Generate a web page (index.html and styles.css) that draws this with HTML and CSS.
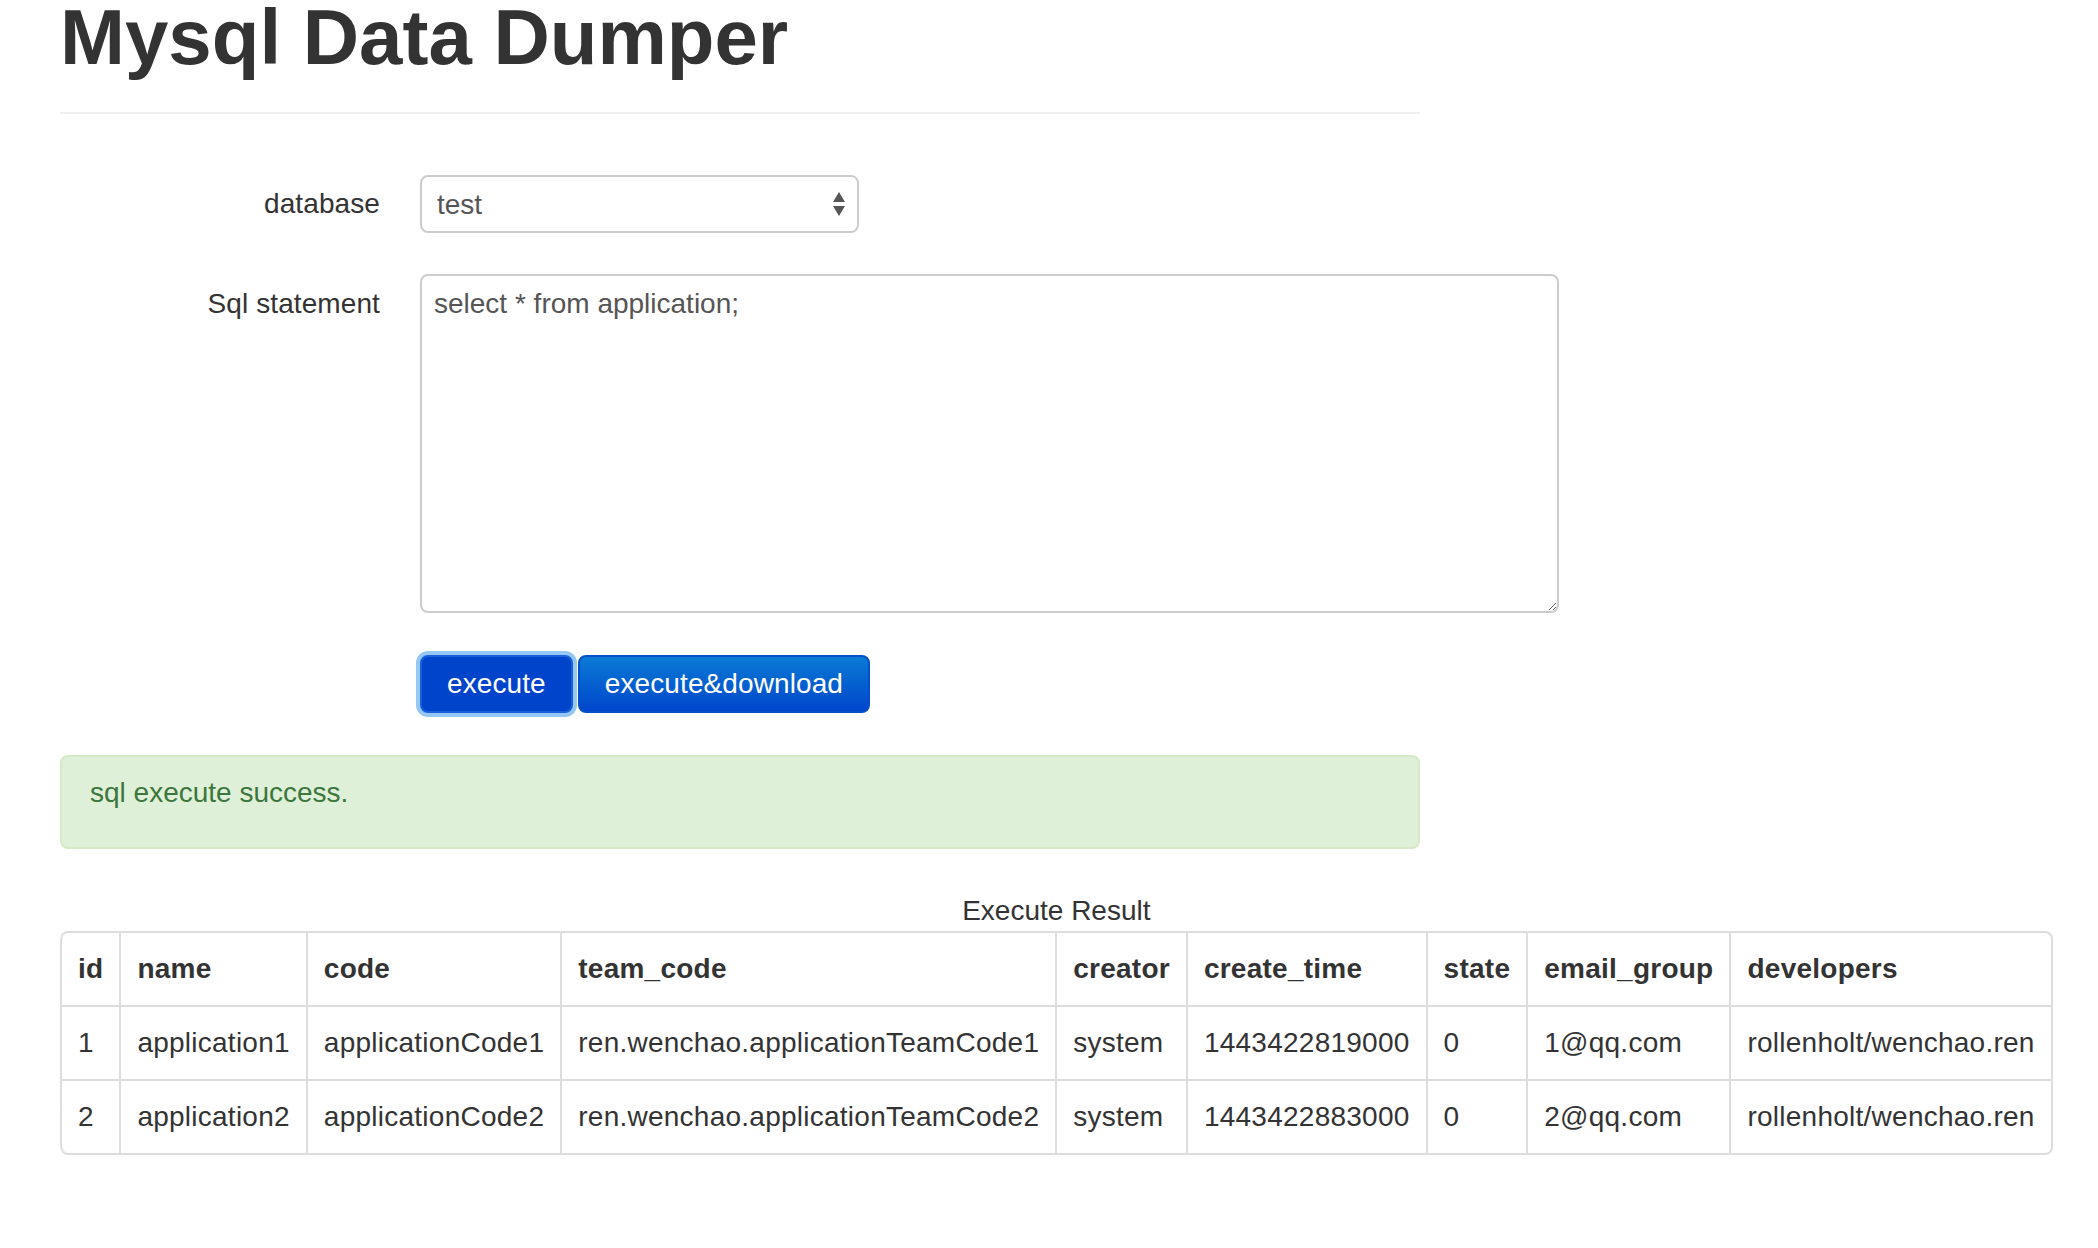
FILE: index.html
```html
<!DOCTYPE html>
<html lang="en">
<head>
<meta charset="utf-8">
<title>Mysql Data Dumper</title>
<link rel="stylesheet" href="styles.css">
</head>
<body>
<div class="container">
  <div class="page-header">
    <h1 class="title">Mysql Data Dumper</h1>
  </div>

  <form class="form">
    <div class="form-row form-row-center">
      <label class="control-label" for="db">database</label>
      <div class="select-wrap">
        <select id="db" class="select">
          <option>test</option>
        </select>
        <svg class="select-arrows" width="14" height="26" viewBox="0 0 14 26">
          <polygon points="7,0 13,10 1,10" fill="#555"/>
          <polygon points="1,14 13,14 7,24" fill="#555"/>
        </svg>
      </div>
    </div>

    <div class="form-row">
      <label class="control-label control-label-top" for="sql">Sql statement</label>
      <textarea id="sql" class="textarea">select * from application;</textarea>
    </div>

    <div class="form-row">
      <div></div>
      <div class="buttons">
        <button type="button" class="btn btn-active">execute</button>
        <button type="button" class="btn btn-primary">execute&amp;download</button>
      </div>
    </div>
  </form>

  <div class="alert">sql execute success.</div>

  <table class="result">
    <caption>Execute Result</caption>
    <thead>
      <tr>
        <th>id</th><th>name</th><th>code</th><th>team_code</th><th>creator</th><th>create_time</th><th>state</th><th>email_group</th><th>developers</th>
      </tr>
    </thead>
    <tbody>
      <tr>
        <td>1</td><td>application1</td><td>applicationCode1</td><td>ren.wenchao.applicationTeamCode1</td><td>system</td><td>1443422819000</td><td>0</td><td>1@qq.com</td><td>rollenholt/wenchao.ren</td>
      </tr>
      <tr>
        <td>2</td><td>application2</td><td>applicationCode2</td><td>ren.wenchao.applicationTeamCode2</td><td>system</td><td>1443422883000</td><td>0</td><td>2@qq.com</td><td>rollenholt/wenchao.ren</td>
      </tr>
    </tbody>
  </table>
</div>
</body>
</html>
```

FILE: styles.css
```css
html, body {
  margin: 0;
  padding: 0;
  background: #fff;
}

body {
  font-family: "Liberation Sans", Helvetica, Arial, sans-serif;
  font-size: 28px;
  line-height: 40px;
  color: #333;
}

.container {
  width: 1360px;
  padding-left: 60px;
}

.page-header {
  padding-bottom: 38px;
  border-bottom: 2px solid #eee;
}

.title {
  margin: 0;
  font-size: 78px;
  line-height: 74px;
  font-weight: bold;
  color: #333;
}

.form {
  margin-top: 61px;
  display: flex;
  flex-direction: column;
  gap: 41px;
}

.form-row {
  display: grid;
  grid-template-columns: 320px auto;
  column-gap: 40px;
  align-items: start;
}

.form-row-center {
  align-items: center;
}

.control-label {
  text-align: right;
  line-height: 40px;
  letter-spacing: 0.1px;
}

.control-label-top {
  padding-top: 10px;
}

.select-wrap {
  position: relative;
  width: 439px;
}

.select {
  display: block;
  width: 439px;
  height: 58px;
  box-sizing: border-box;
  border: 2px solid #ccc;
  border-radius: 8px;
  background: #fff;
  padding: 0 15px;
  font-family: inherit;
  font-size: 28px;
  color: #555;
  -webkit-appearance: none;
  appearance: none;
  outline: none;
}

.select-arrows {
  position: absolute;
  right: 13px;
  top: 17px;
}

.textarea {
  display: block;
  width: 1139px;
  height: 339px;
  box-sizing: border-box;
  border: 2px solid #ccc;
  border-radius: 8px;
  padding: 8px 12px;
  font-family: inherit;
  font-size: 28px;
  line-height: 40px;
  color: #555;
  background: #fff;
  resize: both;
  outline: none;
  margin: 0;
}

.buttons {
  display: flex;
  gap: 5px;
  padding-top: 1px;
}

.btn {
  height: 58px;
  box-sizing: border-box;
  padding: 0 25px;
  border-radius: 8px;
  font-family: inherit;
  font-size: 28px;
  line-height: 40px;
  color: #fff;
  cursor: pointer;
  margin: 0;
  letter-spacing: 0.1px;
}

.btn-active {
  background: #0044cc;
  border: 2px solid #1a5fd9;
  box-shadow: 0 0 0 4px rgba(102, 175, 240, 0.7);
}

.btn-primary {
  background: linear-gradient(to bottom, #0a7ad5, #0046cb);
  border: 2px solid #0450c8;
}

.alert {
  margin-top: 42px;
  width: 1360px;
  box-sizing: border-box;
  background: #dff0d8;
  border: 2px solid #d6e9c6;
  border-radius: 8px;
  color: #3c763d;
  padding: 16px 28px 34px;
  line-height: 40px;
}

.result {
  margin-top: 42px;
  border-collapse: separate;
  border-spacing: 0;
  border: 2px solid #ddd;
  border-left: 0;
  border-radius: 8px;
}

.result caption {
  caption-side: top;
  text-align: center;
  line-height: 40px;
  color: #333;
  padding: 0;
}

.result th,
.result td {
  padding: 16px;
  line-height: 40px;
  text-align: left;
  white-space: nowrap;
  border-left: 2px solid #ddd;
  vertical-align: top;
  letter-spacing: 0.25px;
}

.result th {
  font-weight: bold;
}

.result tbody td {
  border-top: 2px solid #ddd;
}

.result thead tr th:first-child {
  border-top-left-radius: 8px;
}

.result tbody tr:last-child td:first-child {
  border-bottom-left-radius: 8px;
}
```
